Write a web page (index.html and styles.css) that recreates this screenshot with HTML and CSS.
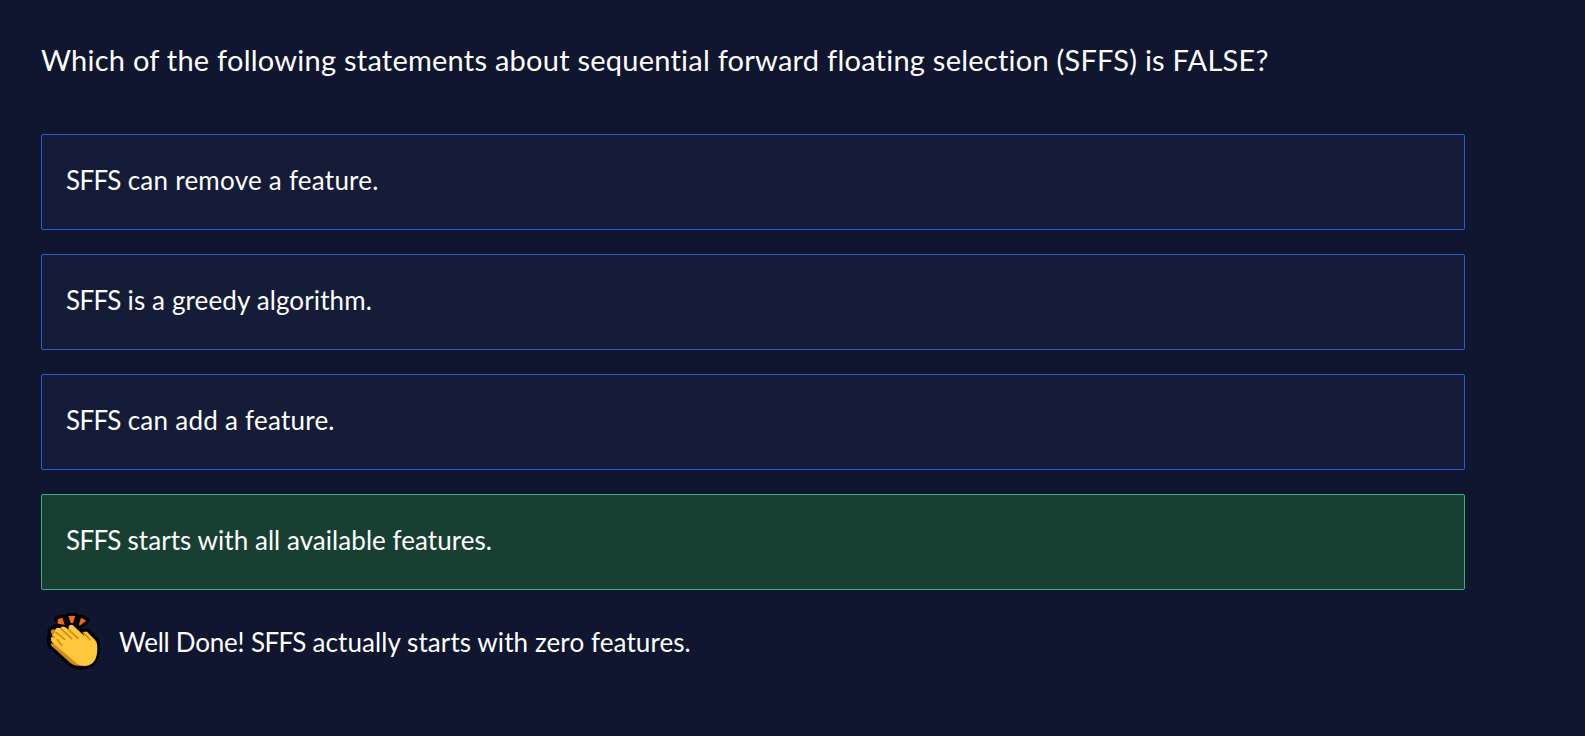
FILE: index.html
```html
<!DOCTYPE html>
<html lang="en">
<head>
<meta charset="utf-8">
<title>Quiz</title>
<link rel="stylesheet" href="styles.css">
</head>
<body>
<main class="quiz">
  <h1 class="question">Which of the following statements about sequential forward floating selection (SFFS) is FALSE?</h1>
  <ul class="options">
    <li class="option wide"><span class="acronym">SFFS</span> can remove a feature.</li>
    <li class="option"><span class="acronym">SFFS</span> is a greedy algorithm.</li>
    <li class="option wide"><span class="acronym">SFFS</span> can add a feature.</li>
    <li class="option correct"><span class="acronym">SFFS</span> starts with all available features.</li>
  </ul>
  <div class="feedback">
    <svg class="clap" viewBox="48 36 168 180" aria-hidden="true">
      <g stroke="#000" stroke-width="20" stroke-linejoin="round" fill="#000">
        <path d="M83 58L97 53L103 73Z M116 49H135L126 67Z M153 54L167 62L149 76Z"/>
        <path d="M72 86Q74 79 81 83Q85 77 94 81Q99 77 106 84L118 86Q117 75 128 75L160 104Q160 94 171 96L182 106L199 124Q204 169 188 186Q168 201 143 198Q126 193 112 180L70 140Q60 136 63 130Q57 120 64 114Q59 106 67 103Q60 96 64 90Z"/>
      </g>
      <path class="spark" d="M83 58L97 53L104 74L83 71Z M115 48H136L129 69H122Z M153 53L169 62L149 77L147 73Z"/>
      <path class="shade" d="M66 88L80 91L106 111L102 126L119 140L160 197H145Q130 197 117 185L65 138Q60 134 63 130L74 132L64 121Q59 111 67 110L66 103Q59 95 66 88Z"/>
      <path class="palm" d="M78 98Q71 90 80 84Q87 81 94 86Q89 80 98 80Q103 79 110 85L120 93Q112 82 119 76Q126 72 132 79L164 109Q156 97 165 95Q171 93 180 105L193 118Q202 124 202 148Q201 195 166 198Q148 198 139 189L66 127Q60 121 65 115Q70 111 78 116L68 104Q71 97 78 98Z"/>
      <path class="crease" d="M79 98L104 118M94 87L125 116M82 119L96 136M115 88L144 115M160 98L180 119"/>
    </svg>
    <p class="message"><span class="praise">Well Done!</span> <span class="acronym">SFFS</span> actually starts with zero features.</p>
  </div>
</main>
</body>
</html>
```
FILE: styles.css
```css
* { box-sizing: border-box; margin: 0; padding: 0; }
body {
  background: #10162f;
  color: #fff;
  font-family: Lato, "Open Sans", sans-serif;
  font-size: 26px;
  min-height: 736px;
}
.quiz { width: 1465px; padding: 40px 0 0 41px; }
.question {
  font-size: 29px;
  font-weight: 400;
  line-height: 40px;
  letter-spacing: 0.24px;
  white-space: nowrap;
}
.options { display: grid; gap: 24px; list-style: none; margin-top: 54px; }
.option {
  height: 96px;
  padding: 23px 24px;
  line-height: 44px;
  letter-spacing: 0.12px;
  background: #151c38;
  border: 1px solid #2b5ccc;
  border-radius: 2px;
}
.option.wide { letter-spacing: 0.25px; }
.option.correct { letter-spacing: 0.05px; background: #174032; border-color: #3aaf85; }
.option .acronym, .message .acronym { letter-spacing: -0.6px; }
.feedback { display: flex; align-items: center; gap: 17px; margin: 22px 0 0 5px; }
.clap { width: 56px; height: 60px; }
.message { line-height: 44px; letter-spacing: 0.09px; }
.praise { letter-spacing: -0.25px; }
.spark { fill: #fa6611; }
.shade { fill: #d48c0d; }
.palm { fill: #ffc83d; }
.crease { fill: none; stroke: #d48c0d; stroke-width: 5; stroke-linecap: round; }
```
